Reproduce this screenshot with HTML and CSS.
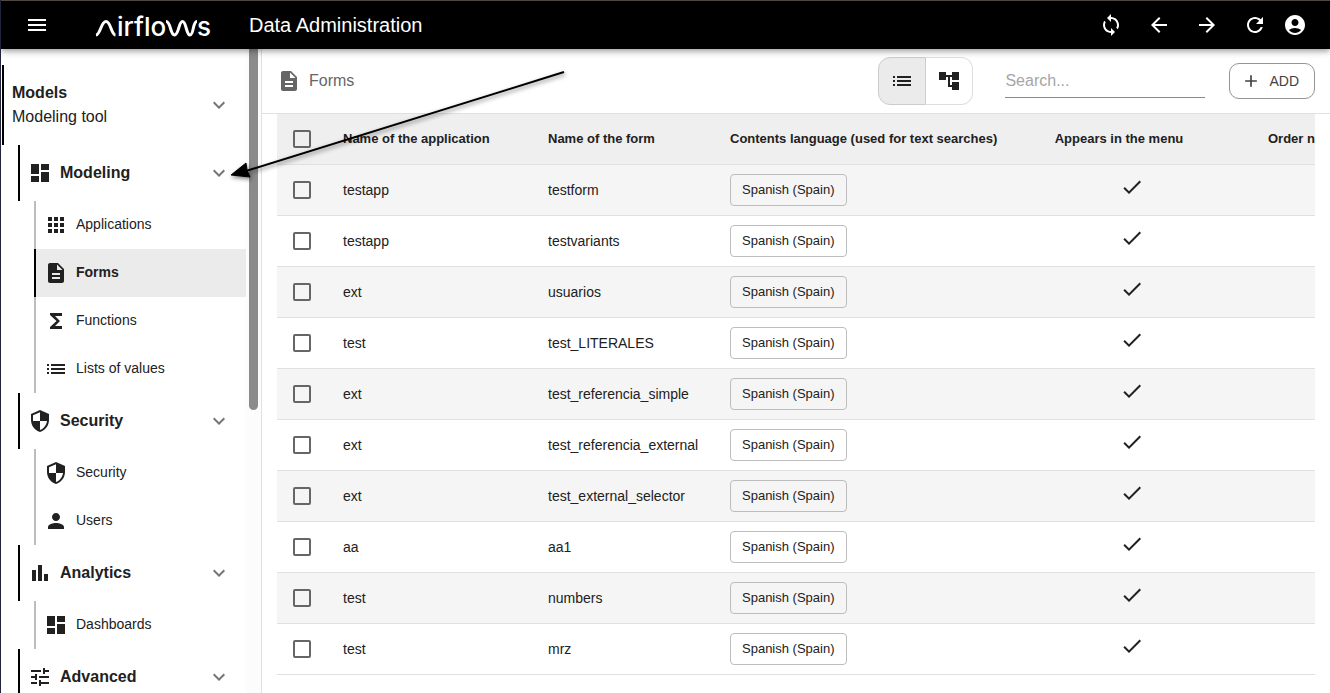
FILE: index.html
```html
<!DOCTYPE html>
<html lang="en">
<head>
<meta charset="utf-8">
<meta name="viewport" content="width=device-width, initial-scale=1">
<title>Data Administration</title>
<link rel="stylesheet" href="styles.css">
</head>
<body>
<svg class="sprite" aria-hidden="true">
  <symbol id="menu" viewBox="0 0 24 24"><path d="M3 18h18v-2H3v2zm0-5h18v-2H3v2zm0-7v2h18V6H3z"/></symbol>
  <symbol id="sync" viewBox="0 0 24 24"><path d="M12 4V1L8 5l4 4V6c3.31 0 6 2.69 6 6 0 1.01-.25 1.97-.7 2.8l1.46 1.46C19.54 15.03 20 13.57 20 12c0-4.42-3.58-8-8-8zm0 14c-3.31 0-6-2.69-6-6 0-1.01.25-1.97.7-2.8L5.24 7.74C4.46 8.97 4 10.43 4 12c0 4.42 3.58 8 8 8v3l4-4-4-4v3z"/></symbol>
  <symbol id="back" viewBox="0 0 24 24"><path d="M20 11H7.83l5.59-5.59L12 4l-8 8 8 8 1.41-1.41L7.83 13H20v-2z"/></symbol>
  <symbol id="forward" viewBox="0 0 24 24"><path d="M12 4l-1.41 1.41L16.17 11H4v2h12.17l-5.58 5.59L12 20l8-8z"/></symbol>
  <symbol id="refresh" viewBox="0 0 24 24"><path d="M17.65 6.35C16.2 4.9 14.21 4 12 4c-4.42 0-7.99 3.58-7.99 8s3.57 8 7.99 8c3.73 0 6.84-2.55 7.73-6h-2.08c-.82 2.33-3.04 4-5.65 4-3.31 0-6-2.69-6-6s2.69-6 6-6c1.66 0 3.14.69 4.22 1.78L13 11h7V4l-2.35 2.35z"/></symbol>
  <symbol id="account" viewBox="0 0 24 24"><path d="M12 2C6.48 2 2 6.48 2 12s4.48 10 10 10 10-4.48 10-10S17.52 2 12 2zm0 4c1.93 0 3.5 1.57 3.5 3.5S13.93 13 12 13s-3.5-1.57-3.5-3.5S10.07 6 12 6zm0 14c-2.03 0-4.43-.82-6.14-2.88C7.55 15.8 9.68 15 12 15s4.45.8 6.14 2.12C16.43 19.18 14.03 20 12 20z"/></symbol>
  <symbol id="more" viewBox="0 0 24 24"><path d="M16.59 8.59 12 13.17 7.41 8.59 6 10l6 6 6-6z"/></symbol>
  <symbol id="dashboard" viewBox="0 0 24 24"><path d="M3 13h8V3H3v10zm0 8h8v-6H3v6zm10 0h8V11h-8v10zm0-18v6h8V3h-8z"/></symbol>
  <symbol id="apps" viewBox="0 0 24 24"><path d="M4 8h4V4H4v4zm6 12h4v-4h-4v4zm-6 0h4v-4H4v4zm0-6h4v-4H4v4zm6 0h4v-4h-4v4zm6-10v4h4V4h-4zm-6 4h4V4h-4v4zm6 6h4v-4h-4v4zm0 6h4v-4h-4v4z"/></symbol>
  <symbol id="description" viewBox="0 0 24 24"><path d="M14 2H6c-1.1 0-1.99.9-1.99 2L4 20c0 1.1.89 2 1.99 2H18c1.1 0 2-.9 2-2V8l-6-6zm2 16H8v-2h8v2zm0-4H8v-2h8v2zm-3-5V3.5L18.5 9H13z"/></symbol>
  <symbol id="functions" viewBox="0 0 24 24"><path d="M18 4H6v2l6.500 6L6 18v2h12v-3h-7l5-5-5-5h7z"/></symbol>
  <symbol id="list" viewBox="0 0 24 24"><path d="M3 13h2v-2H3v2zm0 4h2v-2H3v2zm0-8h2V7H3v2zm4 4h14v-2H7v2zm0 4h14v-2H7v2zM7 7v2h14V7H7z"/></symbol>
  <symbol id="security" viewBox="0 0 24 24"><path d="M12 1L3 5v6c0 5.55 3.84 10.74 9 12 5.16-1.26 9-6.45 9-12V5l-9-4zm0 10.99h7c-.53 4.12-3.28 7.79-7 8.94V12H5V6.3l7-3.11v8.8z"/></symbol>
  <symbol id="person" viewBox="0 0 24 24"><path d="M12 12c2.21 0 4-1.79 4-4s-1.79-4-4-4-4 1.79-4 4 1.79 4 4 4zm0 2c-2.67 0-8 1.34-8 4v2h16v-2c0-2.66-5.33-4-8-4z"/></symbol>
  <symbol id="chart" viewBox="0 0 24 24"><path d="M4 9h4v11H4zm12 4h4v7h-4zm-6-9h4v16h-4z"/></symbol>
  <symbol id="tune" viewBox="0 0 24 24"><path d="M3 17v2h6v-2H3zM3 5v2h10V5H3zm10 16v-2h8v-2h-8v-2h-2v6h2zM7 9v2H3v2h4v2h2V9H7zm14 4v-2H11v2h10zm-6-4h2V7h4V5h-4V3h-2v6z"/></symbol>
  <symbol id="tree" viewBox="0 0 24 24"><path d="M22 11V3h-7v3H9V3H2v8h7V8h2v10h4v3h7v-8h-7v3h-2V8h2v3z"/></symbol>
  <symbol id="add" viewBox="0 0 24 24"><path d="M19 13h-6v6h-2v-6H5v-2h6V5h2v6h6v2z"/></symbol>
  <symbol id="check" viewBox="0 0 24 24"><path d="M9 16.17L4.83 12l-1.42 1.41L9 19 21 7l-1.41-1.41z"/></symbol>
</svg>

<header class="topbar">
  <button class="icon-button" type="button" aria-label="Menu"><svg class="icon"><use href="#menu"/></svg></button>
  <svg class="logo" viewBox="0 0 120 32" role="img" aria-label="airflows">
    <path d="M3 26C7.500 25.500 8 12.500 13 12.500S18 25.500 22.500 26"/>
    <text x="24" y="27">irflo</text>
    <path d="M73 12.500C78 12.500 77 26 81.500 26s4-13.500 8-13.500S93 26 97 26 99.500 12.500 104 12.500"/>
    <text x="104" y="27">s</text>
  </svg>
  <h1 class="title">Data Administration</h1>
  <div class="actions">
    <button class="icon-button" type="button" aria-label="Synchronize"><svg class="icon"><use href="#sync"/></svg></button>
    <button class="icon-button" type="button" aria-label="Back"><svg class="icon"><use href="#back"/></svg></button>
    <button class="icon-button" type="button" aria-label="Forward"><svg class="icon"><use href="#forward"/></svg></button>
    <button class="icon-button" type="button" aria-label="Refresh"><svg class="icon"><use href="#refresh"/></svg></button>
    <button class="icon-button account" type="button" aria-label="Account"><svg class="icon"><use href="#account"/></svg></button>
  </div>
</header>

<div class="layout">
  <aside class="sidebar">
    <nav class="nav" aria-label="Models">
      <button class="root" type="button">
        <span class="label"><strong>Models</strong><span>Modeling tool</span></span>
        <svg class="icon chevron"><use href="#more"/></svg>
      </button>
      <section class="group">
        <button class="group-head" type="button"><svg class="icon"><use href="#dashboard"/></svg><span class="label">Modeling</span><svg class="icon chevron"><use href="#more"/></svg></button>
        <a class="item" href="#applications"><svg class="icon"><use href="#apps"/></svg><span class="name">Applications</span></a>
        <a class="item active" href="#forms" aria-current="page"><svg class="icon"><use href="#description"/></svg><span class="name">Forms</span></a>
        <a class="item" href="#functions-list"><svg class="icon"><use href="#functions"/></svg><span class="name">Functions</span></a>
        <a class="item" href="#values"><svg class="icon"><use href="#list"/></svg><span class="name">Lists of values</span></a>
      </section>
      <section class="group">
        <button class="group-head" type="button"><svg class="icon"><use href="#security"/></svg><span class="label">Security</span><svg class="icon chevron"><use href="#more"/></svg></button>
        <a class="item" href="#security-list"><svg class="icon"><use href="#security"/></svg><span class="name">Security</span></a>
        <a class="item" href="#users"><svg class="icon"><use href="#person"/></svg><span class="name">Users</span></a>
      </section>
      <section class="group">
        <button class="group-head" type="button"><svg class="icon"><use href="#chart"/></svg><span class="label">Analytics</span><svg class="icon chevron"><use href="#more"/></svg></button>
        <a class="item" href="#dashboards"><svg class="icon"><use href="#dashboard"/></svg><span class="name">Dashboards</span></a>
      </section>
      <section class="group">
        <button class="group-head" type="button"><svg class="icon"><use href="#tune"/></svg><span class="label">Advanced</span><svg class="icon chevron"><use href="#more"/></svg></button>
      </section>
    </nav>
    <div class="track"><div class="thumb"></div></div>
  </aside>

  <main class="content">
    <div class="toolbar">
      <svg class="icon"><use href="#description"/></svg>
      <h2 class="heading">Forms</h2>
      <div class="toggle">
        <button class="selected" type="button" aria-label="List view" aria-pressed="true"><svg class="icon"><use href="#list"/></svg></button>
        <button class="other" type="button" aria-label="Tree view" aria-pressed="false"><svg class="icon"><use href="#tree"/></svg></button>
      </div>
      <input class="search" type="text" placeholder="Search..." aria-label="Search">
      <button class="add" type="button"><svg class="icon"><use href="#add"/></svg>ADD</button>
    </div>
    <div class="table-wrap">
      <table class="grid">
        <colgroup><col class="c-box"><col class="c-app"><col class="c-form"><col class="c-lang"><col class="c-menu"><col class="c-order"></colgroup>
        <thead>
          <tr><th class="box"><input type="checkbox" aria-label="Select all"></th><th>Name of the application</th><th>Name of the form</th><th>Contents language (used for text searches)</th><th class="menu-head">Appears in the menu</th><th>Order number</th></tr>
        </thead>
        <tbody>
          <tr><td class="box"><input type="checkbox" aria-label="Select testform"></td><td>testapp</td><td>testform</td><td><span class="chip">Spanish (Spain)</span></td><td class="mark"><svg class="icon"><use href="#check"/></svg></td><td></td></tr>
          <tr><td class="box"><input type="checkbox" aria-label="Select testvariants"></td><td>testapp</td><td>testvariants</td><td><span class="chip">Spanish (Spain)</span></td><td class="mark"><svg class="icon"><use href="#check"/></svg></td><td></td></tr>
          <tr><td class="box"><input type="checkbox" aria-label="Select usuarios"></td><td>ext</td><td>usuarios</td><td><span class="chip">Spanish (Spain)</span></td><td class="mark"><svg class="icon"><use href="#check"/></svg></td><td></td></tr>
          <tr><td class="box"><input type="checkbox" aria-label="Select test_LITERALES"></td><td>test</td><td>test_LITERALES</td><td><span class="chip">Spanish (Spain)</span></td><td class="mark"><svg class="icon"><use href="#check"/></svg></td><td></td></tr>
          <tr><td class="box"><input type="checkbox" aria-label="Select test_referencia_simple"></td><td>ext</td><td>test_referencia_simple</td><td><span class="chip">Spanish (Spain)</span></td><td class="mark"><svg class="icon"><use href="#check"/></svg></td><td></td></tr>
          <tr><td class="box"><input type="checkbox" aria-label="Select test_referencia_external"></td><td>ext</td><td>test_referencia_external</td><td><span class="chip">Spanish (Spain)</span></td><td class="mark"><svg class="icon"><use href="#check"/></svg></td><td></td></tr>
          <tr><td class="box"><input type="checkbox" aria-label="Select test_external_selector"></td><td>ext</td><td>test_external_selector</td><td><span class="chip">Spanish (Spain)</span></td><td class="mark"><svg class="icon"><use href="#check"/></svg></td><td></td></tr>
          <tr><td class="box"><input type="checkbox" aria-label="Select aa1"></td><td>aa</td><td>aa1</td><td><span class="chip">Spanish (Spain)</span></td><td class="mark"><svg class="icon"><use href="#check"/></svg></td><td></td></tr>
          <tr><td class="box"><input type="checkbox" aria-label="Select numbers"></td><td>test</td><td>numbers</td><td><span class="chip">Spanish (Spain)</span></td><td class="mark"><svg class="icon"><use href="#check"/></svg></td><td></td></tr>
          <tr><td class="box"><input type="checkbox" aria-label="Select mrz"></td><td>test</td><td>mrz</td><td><span class="chip">Spanish (Spain)</span></td><td class="mark"><svg class="icon"><use href="#check"/></svg></td><td></td></tr>
        </tbody>
      </table>
    </div>
  </main>
</div>

<svg class="pointer" viewBox="0 0 350 120" aria-hidden="true">
  <path class="shaft" d="M344 12L26 111"/>
  <path class="head" d="M11 115l15-12 1 7 3 7z"/>
</svg>
</body>
</html>
```
FILE: styles.css
```css
* { box-sizing: border-box; }

body {
  margin: 0;
  height: 100vh;
  display: flex;
  flex-direction: column;
  overflow: hidden;
  border-left: 1px solid #22243a;
  background: #fff;
  color: #212121;
  font-family: "Liberation Sans", Arial, sans-serif;
  font-size: 14px;
}

button {
  border: 0;
  padding: 0;
  background: none;
  color: inherit;
  font: inherit;
  text-align: left;
}

.sprite { display: none; }

.icon {
  width: 24px;
  height: 24px;
  flex: none;
  display: block;
  fill: currentColor;
}

.topbar {
  position: relative;
  z-index: 1;
  flex: none;
  display: flex;
  align-items: center;
  height: 49px;
  padding: 0 19px 0 12px;
  border-top: 1px solid #4f4840;
  background: #000;
  color: #fff;
  box-shadow: 0 2px 4px -1px rgba(0, 0, 0, .2), 0 4px 5px rgba(0, 0, 0, .14), 0 1px 10px rgba(0, 0, 0, .12);
}

.icon-button {
  display: flex;
  align-items: center;
  justify-content: center;
  width: 48px;
  height: 48px;
}

.icon-button.account { width: 32px; }

.logo {
  width: 120px;
  height: 32px;
  margin: 0 36px 0 32px;
  overflow: visible;
}

.logo path {
  fill: none;
  stroke: #fff;
  stroke-width: 3;
}

.logo text {
  fill: #fff;
  font-family: Inter, sans-serif;
  font-size: 26px;
  font-weight: 500;
}

.title {
  margin: 0;
  font-size: 20px;
  font-weight: 400;
}

.actions {
  display: flex;
  margin-left: auto;
}

.layout {
  flex: 1;
  display: flex;
  min-height: 0;
}

.sidebar {
  flex: none;
  display: flex;
  width: 261px;
  border-right: 1px solid #e0e0e0;
  overflow: hidden;
}

.nav {
  flex: 1;
  padding: 16px 0 0 1px;
}

.root,
.group-head {
  display: flex;
  align-items: center;
  gap: 8px;
  width: 100%;
  padding: 0 15px 0 8px;
  border-left: 2px solid #000;
  font-size: 16px;
}

.root {
  height: 80px;
  line-height: 24px;
}

.root .label {
  display: flex;
  flex-direction: column;
}

.label { flex: 1; }

.group { padding-left: 16px; }

.group-head {
  height: 56px;
  font-weight: 700;
}

.chevron { color: #757575; }

.item {
  display: flex;
  align-items: center;
  gap: 8px;
  height: 48px;
  margin-left: 16px;
  padding-left: 8px;
  border-left: 2px solid #bdbdbd;
  color: inherit;
  text-decoration: none;
}

.name { padding-bottom: 2px; }

.item.active {
  border-color: #000;
  background: #ebebeb;
  font-weight: 700;
}

.track {
  flex: none;
  width: 15px;
  padding: 0 3px;
  background: #fcfcfc;
}

.thumb {
  height: 56%;
  border-radius: 0 0 5px 5px;
  background: #8b8b8b;
}

.content {
  flex: 1;
  min-width: 0;
}

.toolbar {
  display: flex;
  align-items: center;
  height: 65px;
  padding: 0 15px;
  border-bottom: 1px solid #e0e0e0;
  color: #666;
}

.heading {
  margin: 0 auto 0 8px;
  font-size: 16px;
  font-weight: 400;
}

.toggle {
  display: flex;
  height: 48px;
  margin-right: 32px;
  color: #212121;
}

.toggle button {
  display: flex;
  align-items: center;
  justify-content: center;
  border: 1px solid #dedede;
}

.toggle .selected {
  width: 48px;
  border-color: #ccc;
  border-radius: 12px 0 0 12px;
  background: #ebebeb;
}

.toggle .other {
  width: 47px;
  border-left: 0;
  border-radius: 0 12px 12px 0;
}

.search {
  width: 200px;
  height: 34px;
  margin-right: 24px;
  padding: 0;
  border: 0;
  border-bottom: 1px solid #888;
  outline: 0;
  background: none;
  color: #212121;
  font: inherit;
  font-size: 16px;
}

.search::placeholder { color: #a6a6a6; }

.add {
  display: flex;
  align-items: center;
  gap: 8px;
  height: 36px;
  padding: 0 15px 0 11px;
  border: 1px solid #949494;
  border-radius: 10px;
  color: #424242;
}

.add .icon {
  width: 20px;
  height: 20px;
}

.table-wrap {
  margin: 0 15px;
  overflow: hidden;
}

.grid {
  width: 1135px;
  table-layout: fixed;
  border-collapse: separate;
  border-spacing: 0;
}

.c-box { width: 50px; }
.c-app { width: 205px; }
.c-form { width: 182px; }
.c-lang { width: 298px; }
.c-menu { width: 240px; }
.c-order { width: 160px; }

.grid th,
.grid td {
  height: 51px;
  padding: 0 16px;
  border-bottom: 1px solid #e0e0e0;
  text-align: left;
  vertical-align: middle;
  white-space: nowrap;
}

.grid th {
  padding-bottom: 1px;
  background: #efefef;
  font-size: 13px;
}

.grid tbody tr:nth-child(odd) { background: #f5f5f5; }

.grid .menu-head {
  padding-right: 42px;
  text-align: center;
}

.grid .mark { padding-bottom: 6px; }

.mark .icon { margin: 0 auto; }

.box input {
  appearance: none;
  display: block;
  width: 18px;
  height: 18px;
  margin: 0;
  border: 2px solid #666;
  border-radius: 2px;
}

.chip {
  display: flex;
  align-items: center;
  width: max-content;
  height: 32px;
  padding: 0 11px 1px;
  border: 1px solid #bdbdbd;
  border-radius: 4px;
  font-size: 13px;
}

.pointer {
  position: absolute;
  z-index: 2;
  top: 60px;
  left: 220px;
  width: 350px;
  height: 120px;
  pointer-events: none;
  filter: drop-shadow(1px 2px 2px rgba(0, 0, 0, .5));
}

.shaft {
  fill: none;
  stroke: #000;
  stroke-width: 2;
}

.head {
  fill: #000;
  stroke: #000;
  stroke-width: 1;
}
```
